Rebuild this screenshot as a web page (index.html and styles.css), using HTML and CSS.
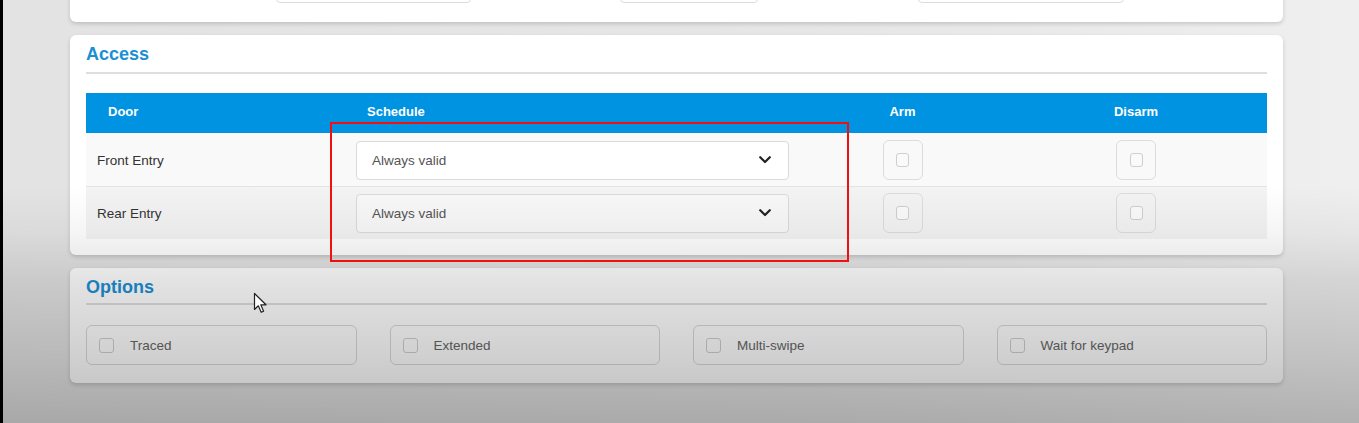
FILE: index.html
```html
<!DOCTYPE html>
<html lang="en">
<head>
<meta charset="utf-8">
<title>Door access</title>
<link rel="stylesheet" href="styles.css">
</head>
<body>
<div class="page">
  <section class="card card-top">
    <div class="top-fields">
      <span></span><div class="field"></div>
      <span></span><div class="field"></div>
      <span></span><div class="field"></div>
    </div>
  </section>

  <section class="card card-access">
    <h2 class="card-title">Access</h2>
    <div class="grid-table">
      <div class="thead cols">
        <div class="th">Door</div>
        <div class="th">Schedule</div>
        <div class="th center">Arm</div>
        <div class="th center">Disarm</div>
      </div>
      <div class="tr cols row-a">
        <div class="td name">Front Entry</div>
        <div class="td">
          <div class="select"><span>Always valid</span>
            <svg class="chev" width="12" height="8" viewBox="0 0 12 8"><polyline points="1.2,1.2 6,6 10.8,1.2" fill="none" stroke="#222" stroke-width="2.2" stroke-linecap="round" stroke-linejoin="round"/></svg>
          </div>
        </div>
        <div class="td center"><div class="toggle"><span class="box"></span></div></div>
        <div class="td center"><div class="toggle"><span class="box"></span></div></div>
      </div>
      <div class="tr cols row-b">
        <div class="td name">Rear Entry</div>
        <div class="td">
          <div class="select"><span>Always valid</span>
            <svg class="chev" width="12" height="8" viewBox="0 0 12 8"><polyline points="1.2,1.2 6,6 10.8,1.2" fill="none" stroke="#222" stroke-width="2.2" stroke-linecap="round" stroke-linejoin="round"/></svg>
          </div>
        </div>
        <div class="td center"><div class="toggle"><span class="box"></span></div></div>
        <div class="td center"><div class="toggle"><span class="box"></span></div></div>
      </div>
    </div>
  </section>

  <section class="card card-options">
    <h2 class="card-title">Options</h2>
    <div class="options">
      <label class="option"><span class="check"></span>Traced</label>
      <label class="option"><span class="check"></span>Extended</label>
      <label class="option"><span class="check"></span>Multi-swipe</label>
      <label class="option"><span class="check"></span>Wait for keypad</label>
    </div>
  </section>
</div>

<div class="shade"></div>
<div class="highlight"></div>
<svg class="cursor" width="16" height="22" viewBox="0 0 16 22">
  <path d="M1.5 1.5 L1.5 17.5 L5.3 13.8 L8.2 20.3 L10.6 19.2 L7.8 12.8 L13 12.8 Z" fill="#fff" stroke="#222" stroke-width="1.2" stroke-linejoin="round"/>
</svg>
</body>
</html>
```

FILE: styles.css
```css
html, body {
  margin: 0;
  height: 423px;
  overflow: hidden;
}
body {
  border-left: 3px solid #000;
  background: linear-gradient(to right, #e3e3e3 0%, #e6e6e6 60%, #efefef 100%);
  font-family: "Liberation Sans", Arial, sans-serif;
  color: #333;
}
.page {
  margin-left: 67px;
  width: 1213px;
  display: flex;
  flex-direction: column;
  gap: 13px;
}
.card {
  background: #fff;
  border-radius: 6px;
  box-shadow: 0 2px 4px rgba(0, 0, 0, 0.16);
  padding: 8px 16px 16px;
}
.card-top {
  margin-top: -40px;
  padding: 3px 0 19px;
  border-radius: 0 0 6px 6px;
}
.top-fields {
  display: grid;
  grid-template-columns: 206px 195px 149px 138px 160px 206px;
}
.field {
  height: 40px;
  border: 1px solid #dcdcdc;
  border-radius: 4px;
  box-sizing: border-box;
}
.card-title {
  margin: 0;
  font-size: 18px;
  line-height: 22px;
  font-weight: bold;
  color: #1b8fd4;
  padding-bottom: 7px;
  border-bottom: 2px solid #dedede;
}
.card-access .card-title { margin-bottom: 19px; }
.card-options { padding-bottom: 18px; }
.card-options .card-title { padding-bottom: 5px; margin-bottom: 20px; }

.cols {
  display: grid;
  grid-template-columns: 259px 455px 205px 1fr;
  align-items: center;
}
.thead {
  background: #0093e2;
  height: 40px;
}
.th {
  color: #fff;
  font-weight: bold;
  font-size: 13px;
  padding-left: 22px;
  padding-bottom: 4px;
}
.th.center { padding-left: 0; text-align: center; }
.row-a { background: #f9f9f9; border-bottom: 1px solid #e4e4e4; height: 53px; }
.row-b { background: #f3f3f3; height: 52px; }
.row-a .td { padding-top: 1px; }
.row-b .td { padding-top: 0; }
.td { padding: 0 11px; font-size: 13.5px; }
.td.center { display: flex; justify-content: center; padding-left: 0; padding-right: 0; }
.td.name { color: #333; }
.select {
  height: 39px;
  box-sizing: border-box;
  border: 1px solid #dadada;
  border-radius: 4px;
  background: #fff;
  display: flex;
  align-items: center;
  justify-content: space-between;
  padding: 0 17px 0 15px;
  color: #555;
}
.row-b .select { background: #f8f8f8; }
.toggle {
  width: 40px;
  height: 40px;
  box-sizing: border-box;
  border: 1px solid #dcdcdc;
  border-radius: 6px;
  display: flex;
  align-items: center;
  justify-content: center;
}
.box {
  width: 13px;
  height: 14px;
  box-sizing: border-box;
  border: 1px solid #cfcfcf;
  border-radius: 3px;
  background: #fafafa;
}

.options {
  display: grid;
  grid-template-columns: repeat(4, 1fr);
  gap: 33px;
}
.option {
  height: 40px;
  box-sizing: border-box;
  border: 1px solid #d8d8d8;
  border-radius: 6px;
  display: flex;
  align-items: center;
  padding-left: 12px;
  gap: 16px;
  font-size: 13.5px;
  color: #666;
}
.check {
  width: 15px;
  height: 15px;
  box-sizing: border-box;
  border: 1px solid #cfcfcf;
  border-radius: 3px;
}

.shade {
  position: absolute;
  left: 0;
  top: 0;
  width: 1359px;
  height: 423px;
  pointer-events: none;
  background: linear-gradient(to bottom,
    rgba(0,0,0,0) 0%,
    rgba(0,0,0,0) 44%,
    rgba(0,0,0,0.04) 55%,
    rgba(0,0,0,0.11) 66%,
    rgba(0,0,0,0.19) 85%,
    rgba(0,0,0,0.26) 100%);
}
.highlight {
  position: absolute;
  left: 330px;
  top: 122px;
  width: 519px;
  height: 140px;
  box-sizing: border-box;
  border: 2px solid #f01010;
}
.cursor {
  position: absolute;
  left: 253px;
  top: 292px;
}
```
